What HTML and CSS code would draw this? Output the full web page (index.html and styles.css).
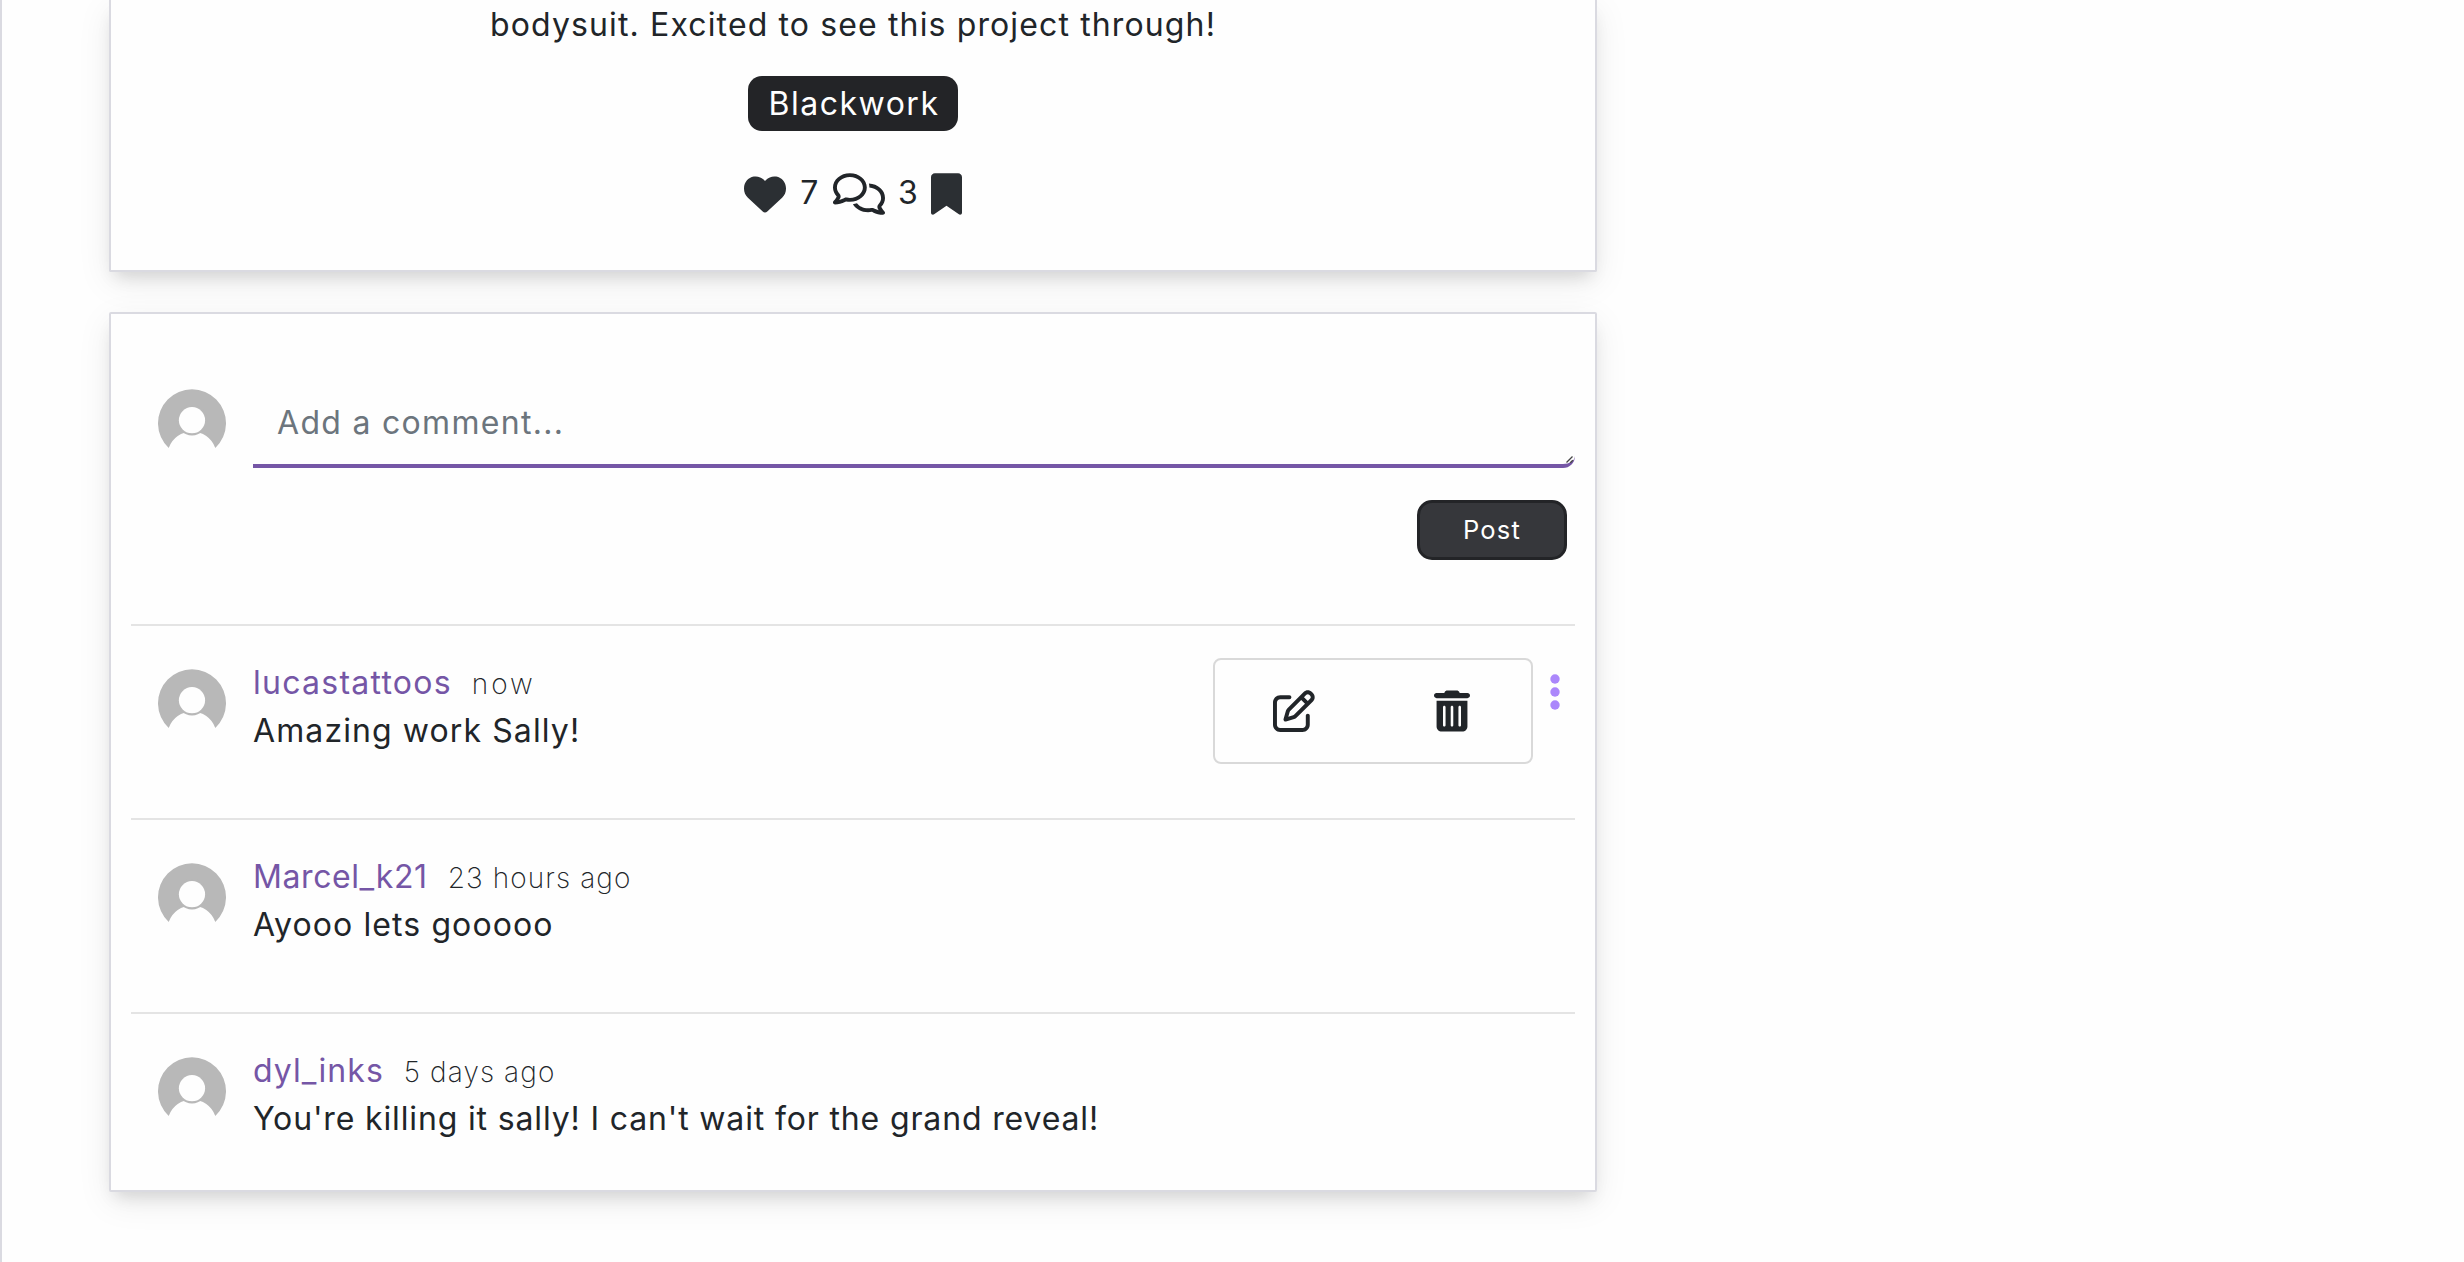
FILE: index.html
```html
<!DOCTYPE html>
<html lang="en">
<head>
<meta charset="utf-8">
<title>Post comments</title>
<link rel="stylesheet" href="styles.css">
</head>
<body>
<svg class="defs" width="0" height="0" aria-hidden="true">
  <symbol id="avatar" viewBox="0 0 68 68">
    <path fill="#b8b8b8" d="M10.7 59A34 34 0 1 1 57.3 59A24.7 24.7 0 0 0 10.7 59z"/>
    <circle cx="34" cy="31.2" r="15.2" fill="#b8b8b8"/>
    <circle cx="34" cy="31.2" r="13.1" fill="#fefefe"/>
  </symbol>
</svg>
<main class="page">
  <section class="card post">
    <p class="caption">bodysuit. Excited to see this project through!</p>
    <span class="badge">Blackwork</span>
    <div class="stats">
      <svg class="heart" viewBox="0 0 512 512"><path d="M47.6 300.4L228.3 469.1c7.5 7 17.4 10.9 27.7 10.9s20.2-3.9 27.7-10.9L464.4 300.4c30.4-28.3 47.6-68 47.6-109.5v-5.8c0-69.9-50.5-129.5-119.4-141C347 36.5 300.6 51.4 268 84L256 96 244 84c-32.6-32.6-79-47.5-124.6-39.9C50.5 55.6 0 115.2 0 185.1v5.8c0 41.5 17.2 81.2 47.6 109.5z"/></svg>
      <span class="count">7</span>
      <svg class="bubbles" viewBox="0 0 640 512"><path d="M88.2 309.1c9.8-18.3 6.8-40.8-7.5-55.8C59.4 230.9 48 204 48 176c0-63.5 63.8-128 160-128s160 64.5 160 128s-63.8 128-160 128c-13.1 0-25.8-1.3-37.8-3.6c-10.4-2-21.2-.6-30.7 4.2c-4.1 2.1-8.3 4.1-12.6 6c-16 7.2-32.9 13.5-49.9 18c2.8-4.6 5.4-9.1 7.9-13.6c1.1-1.9 2.2-3.9 3.2-5.9zM0 176c0 41.8 17.2 80.1 45.9 110.3c-.9 1.7-1.9 3.5-2.8 5.1c-10.3 18.4-22.3 36.5-36.6 52.1c-6.6 7-8.3 17.2-4.6 25.9C5.8 378.3 14.4 384 24 384c43 0 86.5-13.3 122.7-29.7c4.8-2.2 9.6-4.5 14.2-6.8c15.1 3 30.9 4.5 47.1 4.5c114.9 0 208-78.8 208-176S322.9 0 208 0S0 78.8 0 176zM432 480c16.2 0 31.9-1.6 47.1-4.5c4.6 2.3 9.4 4.6 14.2 6.8C529.5 498.7 573 512 616 512c9.6 0 18.2-5.7 22-14.5c3.8-8.8 2-19-4.6-25.9c-14.2-15.6-26.2-33.7-36.6-52.1c-.9-1.7-1.9-3.4-2.8-5.1C622.8 384.1 640 345.8 640 304c0-94.4-87.9-171.5-198.2-175.8c4.1 15.2 6.2 31.2 6.2 47.8l0 .6c87.2 6.7 144 67.5 144 127.4c0 28-11.4 54.9-32.7 77.2c-14.3 15-17.3 37.6-7.5 55.8c1.1 2 2.2 4 3.2 5.9c2.5 4.5 5.2 9 7.9 13.6c-17-4.5-33.9-10.7-49.9-18c-4.3-1.9-8.5-3.9-12.6-6c-9.5-4.8-20.3-6.2-30.7-4.2c-12.1 2.4-24.8 3.6-37.8 3.6c-61.7 0-110-26.5-136.8-62.3c-16 5.4-32.8 9.4-50 11.8C279 439.8 350 480 432 480z"/></svg>
      <span class="count">3</span>
      <svg class="bookmark" viewBox="0 0 384 512"><path d="M0 48V487.7C0 501.1 10.9 512 24.3 512c5 0 9.9-1.5 14-4.4L192 400 345.7 507.6c4.1 2.9 9 4.4 14 4.4c13.4 0 24.3-10.9 24.3-24.3V48c0-26.5-21.5-48-48-48H48C21.5 0 0 21.5 0 48z"/></svg>
    </div>
  </section>

  <section class="card comments">
    <form class="composer">
      <svg class="avatar"><use href="#avatar"/></svg>
      <div class="field">Add a comment...
        <svg class="grip" viewBox="0 0 8 8"><path d="M0.5 6.5L6.5 0.5M4.2 6.8L6.8 4.2"/></svg>
      </div>
      <button class="post-button" type="button">Post</button>
    </form>

    <article class="comment">
      <svg class="avatar"><use href="#avatar"/></svg>
      <div class="body">
        <div class="meta"><span class="name name-lucas">lucastattoos</span><span class="time time-now">now</span></div>
        <p class="text">Amazing work Sally!</p>
      </div>
      <div class="menu">
        <svg class="edit" viewBox="0 0 512 512"><path d="M441 58.9L453.1 71c9.4 9.4 9.4 24.6 0 33.9L424 134.1 377.9 88 407 58.9c9.4-9.4 24.6-9.4 33.9 0zM209.8 256.2L344 121.9 390.1 168 255.8 302.2c-2.9 2.9-6.5 5-10.4 6.1l-58.5 16.7 16.7-58.5c1.1-3.9 3.2-7.5 6.1-10.4zM373.1 25L175.8 222.2c-8.7 8.7-15 19.4-18.3 31.1l-28.6 100c-2.4 8.4-.1 17.4 6.1 23.6s15.2 8.5 23.6 6.1l100-28.6c11.8-3.4 22.5-9.7 31.1-18.3L487 138.9c28.1-28.1 28.1-73.7 0-101.8L474.9 25C446.8-3.1 401.2-3.1 373.1 25zM88 64C39.4 64 0 103.4 0 152V424c0 48.6 39.4 88 88 88H360c48.6 0 88-39.4 88-88V312c0-13.3-10.7-24-24-24s-24 10.7-24 24V424c0 22.1-17.9 40-40 40H88c-22.1 0-40-17.9-40-40V152c0-22.1 17.9-40 40-40H200c13.3 0 24-10.7 24-24s-10.7-24-24-24H88z"/></svg>
        <svg class="trash" viewBox="0 0 448 512"><path d="M135.2 17.7C140.6 6.8 151.7 0 163.8 0H284.2c12.1 0 23.2 6.8 28.6 17.7L320 32h96c17.7 0 32 14.3 32 32s-14.3 32-32 32H32C14.3 96 0 81.7 0 64S14.3 32 32 32h96l7.2-14.3zM32 128H416V448c0 35.3-28.7 64-64 64H96c-35.3 0-64-28.7-64-64V128zm96 64c-8.8 0-16 7.2-16 16V432c0 8.8 7.2 16 16 16s16-7.2 16-16V208c0-8.8-7.2-16-16-16zm96 0c-8.8 0-16 7.2-16 16V432c0 8.8 7.2 16 16 16s16-7.2 16-16V208c0-8.8-7.2-16-16-16zm96 0c-8.8 0-16 7.2-16 16V432c0 8.8 7.2 16 16 16s16-7.2 16-16V208c0-8.8-7.2-16-16-16z"/></svg>
      </div>
      <svg class="dots" viewBox="0 0 10 36"><circle cx="5" cy="5" r="4.7"/><circle cx="5" cy="18" r="4.7"/><circle cx="5" cy="31" r="4.7"/></svg>
    </article>

    <article class="comment">
      <svg class="avatar"><use href="#avatar"/></svg>
      <div class="body">
        <div class="meta"><span class="name name-marcel">Marcel_k21</span><span class="time">23 hours ago</span></div>
        <p class="text">Ayooo lets gooooo</p>
      </div>
    </article>

    <article class="comment">
      <svg class="avatar"><use href="#avatar"/></svg>
      <div class="body">
        <div class="meta"><span class="name name-dyl">dyl_inks</span><span class="time">5 days ago</span></div>
        <p class="text text-long">You're killing it sally! I can't wait for the grand reveal!</p>
      </div>
    </article>
  </section>
</main>
</body>
</html>
```
FILE: styles.css
```css
* { box-sizing: border-box; }

body {
  margin: 0;
  background: #fefefe;
  color: #212529;
  font-family: Inter, "Open Sans", sans-serif;
  font-size: 32px;
  font-weight: 430;
  line-height: 48px;
}

p { margin: 0; }
svg { display: block; flex: none; fill: #212529; }
.defs { position: absolute; }

.page {
  height: 1262px;
  overflow: hidden;
  border-left: 2px solid #dadae1;
  padding-left: 107px;
  display: flex;
  flex-direction: column;
  gap: 40px;
}

.card {
  width: 1488px;
  background: #fefefe;
  border: 2px solid #dadae1;
  border-radius: 2px;
  box-shadow: 0 10px 16px -6px rgba(0, 0, 0, 0.13), 0 10px 34px rgba(0, 0, 0, 0.08);
}

.post {
  height: 272px;
  border-top: 0;
  border-top-left-radius: 0;
  border-top-right-radius: 0;
  display: flex;
  flex-direction: column;
  align-items: center;
}

.caption { height: 76px; padding-top: 1px; white-space: nowrap; letter-spacing: 1.13px; }

.badge {
  width: 210px;
  height: 55px;
  padding-left: 2px;
  border-radius: 14px;
  background: #232427;
  color: #fff;
  text-align: center;
  line-height: 56px;
  letter-spacing: 1.5px;
}

.stats { display: flex; align-items: center; height: 42px; margin-top: 42px; }
.heart { width: 42px; height: 42px; fill: #2b2f33; }
.bubbles { width: 52px; height: 42px; }
.bookmark { width: 31px; height: 42px; fill: #2b2f33; }
.count { width: 46.6px; padding-bottom: 3px; text-align: center; }

.comments { height: 880px; padding: 0 20px; }

.composer {
  height: 310px;
  padding: 74px 0 0 27px;
  display: grid;
  grid-template-columns: 95px 1322px;
  grid-template-rows: 112px 60px;
  align-content: start;
}
.avatar { width: 68px; height: 68px; }
.composer .avatar { margin-top: 0.7px; }

.field {
  position: relative;
  height: 80px;
  border-bottom: 4px solid #7556a6;
  border-radius: 0 0 12px 0;
  padding: 11px 24px 0;
  color: #6c757d;
  letter-spacing: 1.3px;
}
.grip {
  position: absolute;
  right: 1px;
  bottom: 0;
  width: 8px;
  height: 8px;
  fill: none;
  stroke: #444;
  stroke-width: 1.3;
}

.post-button {
  grid-column: 2;
  justify-self: end;
  margin-right: 8px;
  width: 150px;
  height: 60px;
  padding: 0;
  border: 3px solid #232427;
  border-radius: 15px;
  background: #36373b;
  color: #fff;
  font: 430 25.5px/1 Inter, "Open Sans", sans-serif;
  letter-spacing: 1.2px;
}

.comment {
  height: 194px;
  border-top: 2px solid #e4e4e4;
  padding: 32px 0 0 27px;
  display: flex;
  align-items: flex-start;
}
.comment .avatar { margin: 10.7px 27px 0 0; }
.body { flex: 1; padding-top: 1px; white-space: nowrap; }
.meta { display: flex; align-items: baseline; height: 48px; }
.text { letter-spacing: 1.1px; }
.text-long { letter-spacing: 0.85px; }

.name { color: #7556a6; }
.name-lucas { letter-spacing: 1.25px; }
.name-marcel { letter-spacing: 0.58px; }
.name-dyl { letter-spacing: 1.05px; }
.time { font-size: 28px; font-weight: 240; margin-left: 20px; letter-spacing: 1.1px; }
.time-now { letter-spacing: 2.9px; }

.menu {
  width: 320px;
  height: 106px;
  border: 2px solid #d9d9d9;
  border-radius: 8px;
  padding-bottom: 1px;
  display: grid;
  grid-template-columns: 1fr 1fr;
  place-items: center;
}
.edit { width: 42px; height: 42px; }
.trash { width: 36px; height: 42px; }
.dots { width: 10px; height: 36px; margin: 16px 15px 0 17px; fill: #ab87fb; }
```
